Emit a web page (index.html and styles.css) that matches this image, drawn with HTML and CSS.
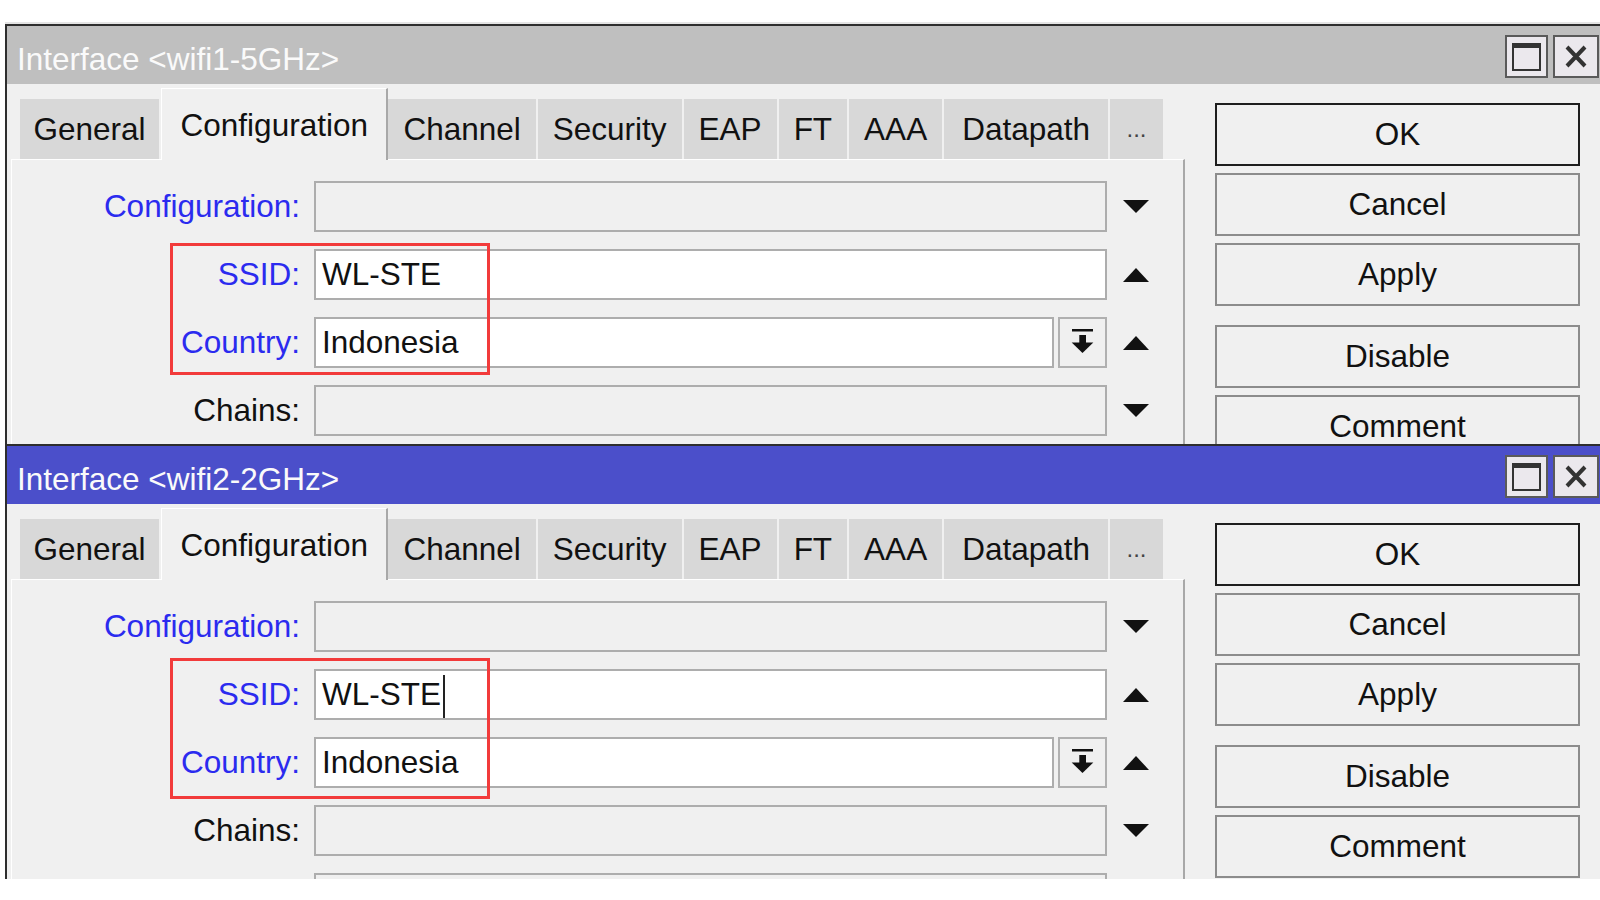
FILE: index.html
```html
<!DOCTYPE html>
<html lang="en">
<head>
<meta charset="utf-8">
<title>Interface windows</title>
<link rel="stylesheet" href="styles.css">
</head>
<body>
<div class="screen">

  <section class="win win-back">
    <header class="titlebar titlebar-grey">
      <span class="title">Interface &lt;wifi1-5GHz&gt;</span>
      <div class="win-ctrls">
        <span class="ctrl ctrl-max"><svg width="29" height="28" viewBox="0 0 29 28"><rect x="1" y="1" width="27" height="26" fill="none" stroke="#333" stroke-width="2"/><rect x="0" y="0" width="29" height="5" fill="#333"/></svg></span>
        <span class="ctrl ctrl-close"><svg width="22" height="23" viewBox="0 0 22 23"><path d="M2 2 L20 21 M20 2 L2 21" stroke="#333" stroke-width="4" fill="none"/></svg></span>
      </div>
    </header>
    <div class="win-body">
      <div class="main">
        <nav class="tabs">
          <span class="tab tab-first">General</span>
          <span class="tab tab-active">Configuration</span>
          <span class="tab tab-after">Channel</span>
          <span class="tab">Security</span>
          <span class="tab">EAP</span>
          <span class="tab">FT</span>
          <span class="tab">AAA</span>
          <span class="tab tab-wide">Datapath</span>
          <span class="tab tab-more">...</span>
        </nav>
        <div class="panel">
          <div class="row">
            <span class="lbl lbl-set">Configuration:</span>
            <div class="field"></div>
            <span class="arrow"><svg width="26" height="14" viewBox="0 0 26 14"><polygon points="0,0 26,0 13,13" fill="#111"/></svg></span>
          </div>
          <div class="row">
            <span class="lbl lbl-set">SSID:</span>
            <div class="field field-on">WL-STE</div>
            <span class="arrow"><svg width="26" height="15" viewBox="0 0 26 15"><polygon points="0,15 26,15 13,1" fill="#111"/></svg></span>
          </div>
          <div class="row">
            <span class="lbl lbl-set">Country:</span>
            <div class="combo">
              <div class="field field-on field-short">Indonesia</div>
              <span class="combo-btn"><svg width="45" height="46" viewBox="0 0 45 46"><rect x="12" y="10" width="21" height="2.5" fill="#111"/><rect x="19.3" y="16" width="6.7" height="8" fill="#111"/><polygon points="11.7,23.5 33.3,23.5 22.5,34" fill="#111"/></svg></span>
            </div>
            <span class="arrow"><svg width="26" height="15" viewBox="0 0 26 15"><polygon points="0,15 26,15 13,1" fill="#111"/></svg></span>
          </div>
          <div class="row">
            <span class="lbl">Chains:</span>
            <div class="field"></div>
            <span class="arrow"><svg width="26" height="14" viewBox="0 0 26 14"><polygon points="0,0 26,0 13,13" fill="#111"/></svg></span>
          </div>
          <div class="row">
            <span class="lbl"></span>
            <div class="field"></div>
            <span class="arrow"></span>
          </div>
          <div class="mark mark-a"></div>
        </div>
      </div>
      <div class="actions">
        <span class="btn btn-default">OK</span>
        <span class="btn">Cancel</span>
        <span class="btn">Apply</span>
        <span class="btn btn-gap">Disable</span>
        <span class="btn">Comment</span>
      </div>
    </div>
  </section>

  <section class="win win-front">
    <header class="titlebar titlebar-blue">
      <span class="title">Interface &lt;wifi2-2GHz&gt;</span>
      <div class="win-ctrls">
        <span class="ctrl ctrl-max"><svg width="29" height="28" viewBox="0 0 29 28"><rect x="1" y="1" width="27" height="26" fill="none" stroke="#333" stroke-width="2"/><rect x="0" y="0" width="29" height="5" fill="#333"/></svg></span>
        <span class="ctrl ctrl-close"><svg width="22" height="23" viewBox="0 0 22 23"><path d="M2 2 L20 21 M20 2 L2 21" stroke="#333" stroke-width="4" fill="none"/></svg></span>
      </div>
    </header>
    <div class="win-body">
      <div class="main">
        <nav class="tabs">
          <span class="tab tab-first">General</span>
          <span class="tab tab-active">Configuration</span>
          <span class="tab tab-after">Channel</span>
          <span class="tab">Security</span>
          <span class="tab">EAP</span>
          <span class="tab">FT</span>
          <span class="tab">AAA</span>
          <span class="tab tab-wide">Datapath</span>
          <span class="tab tab-more">...</span>
        </nav>
        <div class="panel">
          <div class="row">
            <span class="lbl lbl-set">Configuration:</span>
            <div class="field"></div>
            <span class="arrow"><svg width="26" height="14" viewBox="0 0 26 14"><polygon points="0,0 26,0 13,13" fill="#111"/></svg></span>
          </div>
          <div class="row">
            <span class="lbl lbl-set">SSID:</span>
            <div class="field field-on">WL-STE<span class="caret"></span></div>
            <span class="arrow"><svg width="26" height="15" viewBox="0 0 26 15"><polygon points="0,15 26,15 13,1" fill="#111"/></svg></span>
          </div>
          <div class="row">
            <span class="lbl lbl-set">Country:</span>
            <div class="combo">
              <div class="field field-on field-short">Indonesia</div>
              <span class="combo-btn"><svg width="45" height="46" viewBox="0 0 45 46"><rect x="12" y="10" width="21" height="2.5" fill="#111"/><rect x="19.3" y="16" width="6.7" height="8" fill="#111"/><polygon points="11.7,23.5 33.3,23.5 22.5,34" fill="#111"/></svg></span>
            </div>
            <span class="arrow"><svg width="26" height="15" viewBox="0 0 26 15"><polygon points="0,15 26,15 13,1" fill="#111"/></svg></span>
          </div>
          <div class="row">
            <span class="lbl">Chains:</span>
            <div class="field"></div>
            <span class="arrow"><svg width="26" height="14" viewBox="0 0 26 14"><polygon points="0,0 26,0 13,13" fill="#111"/></svg></span>
          </div>
          <div class="row">
            <span class="lbl"></span>
            <div class="field"></div>
            <span class="arrow"></span>
          </div>
          <div class="mark mark-b"></div>
        </div>
      </div>
      <div class="actions">
        <span class="btn btn-default">OK</span>
        <span class="btn">Cancel</span>
        <span class="btn">Apply</span>
        <span class="btn btn-gap">Disable</span>
        <span class="btn">Comment</span>
      </div>
    </div>
  </section>

</div>
</body>
</html>
```

FILE: styles.css
```css
html, body {
  margin: 0;
  background: #ffffff;
}

body {
  font-family: "Liberation Sans", Arial, sans-serif;
  font-size: 31.5px;
  color: #111111;
}

.screen {
  padding: 24px 0 0 5px;
}

.win {
  box-sizing: border-box;
  border-top: 2px solid #2e2e2e;
  border-left: 2px solid #2e2e2e;
  background: #f0f0f0;
  overflow: hidden;
}

.win-back {
  height: 420px;
  box-shadow: 0 -2px 0 #e4e4e4;
}

.win-front {
  height: 435px;
}

/* title bar */
.titlebar {
  display: flex;
  height: 58px;
}

.titlebar-grey {
  background: #bfbfbf;
}

.titlebar-blue {
  background: #4b4fca;
}

.title {
  padding: 8px 0 0 10px;
  line-height: 50px;
  color: #fafafa;
  white-space: nowrap;
}

.win-ctrls {
  display: flex;
  gap: 5px;
  margin-left: auto;
  margin-right: 1px;
  padding-top: 9px;
}

.ctrl {
  box-sizing: border-box;
  height: 43px;
  border: 2px solid #5a5a5a;
  background: #ebe8ed;
  display: flex;
  align-items: center;
  justify-content: center;
}

.ctrl-max {
  width: 43px;
}

.ctrl-close {
  width: 46px;
}

/* body */
.win-body {
  display: flex;
}

.main {
  width: 1178px;
  flex: none;
}

.tabs {
  display: flex;
  align-items: flex-end;
  gap: 2px;
  height: 71px;
  margin: 4px 0 0 13px;
}

.tab {
  box-sizing: border-box;
  height: 60px;
  line-height: 60px;
  padding: 0 15px;
  background: #d8d8d8;
  white-space: nowrap;
}

.tab-first {
  padding: 0 13.5px;
}

.tab-after {
  margin-left: -2px;
}

.tab-wide {
  padding: 0 18px;
}

.tab-active {
  position: relative;
  z-index: 1;
  height: 72px;
  margin-bottom: -1px;
  padding: 6px 18.5px 0;
  background: #f0f0f0;
  border-top: 1px solid #ffffff;
  border-left: 1px solid #ffffff;
  border-right: 2px solid #a8a8a8;
}

.tab-more {
  font-size: 24px;
  color: #444444;
  padding: 0 16.5px;
}

.panel {
  position: relative;
  box-sizing: border-box;
  width: 1174px;
  height: 800px;
  margin-left: 4px;
  padding-top: 21px;
  border-top: 1px solid #ffffff;
  border-left: 1px solid #ffffff;
  border-right: 2px solid #a8a8a8;
}

.row {
  display: flex;
  align-items: center;
  height: 51px;
  margin-bottom: 17px;
}

.lbl {
  flex: none;
  width: 288px;
  margin-right: 14px;
  text-align: right;
  line-height: 51px;
  white-space: nowrap;
}

.lbl-set {
  color: #2b2bef;
}

.field {
  flex: none;
  box-sizing: border-box;
  width: 793px;
  height: 51px;
  padding-left: 6px;
  border: 2px solid #adadad;
  background: #f0f0f0;
  line-height: 47px;
  white-space: nowrap;
}

.field-on {
  background: #ffffff;
}

.caret {
  display: inline-block;
  width: 2px;
  height: 43px;
  margin-left: 2px;
  background: #222222;
  vertical-align: middle;
}

.combo {
  display: flex;
  gap: 4px;
  width: 793px;
  flex: none;
}

.field-short {
  width: 740px;
}

.combo-btn {
  box-sizing: border-box;
  width: 49px;
  height: 51px;
  border: 2px solid #b0b0b0;
  background: #f0f0f0;
  display: flex;
}

.arrow {
  flex: none;
  width: 28px;
  margin-left: 15px;
  display: flex;
  justify-content: center;
}

.mark {
  position: absolute;
  box-sizing: border-box;
  left: 158px;
  width: 320px;
  border: 3px solid #f23b3b;
}

.mark-a {
  top: 83px;
  height: 132px;
}

.mark-b {
  top: 78px;
  height: 141px;
}

/* buttons */
.actions {
  flex: none;
  display: flex;
  flex-direction: column;
  gap: 7px;
  width: 365px;
  margin-left: 30px;
  padding-top: 19px;
}

.btn {
  box-sizing: border-box;
  height: 63px;
  border: 2px solid #8c8c8c;
  background: #f0f0f0;
  display: flex;
  align-items: center;
  justify-content: center;
  white-space: nowrap;
}

.btn-default {
  border-color: #1e1e1e;
}

.btn-gap {
  margin-top: 12px;
}
```
